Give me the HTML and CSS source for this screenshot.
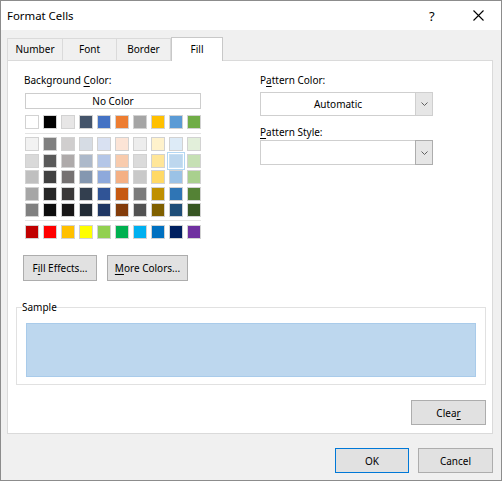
FILE: index.html
```html
<!DOCTYPE html>
<html>
<head>
<meta charset="utf-8">
<link rel="stylesheet" href="styles.css">
</head>
<body>
<div class="dialog">
  <div class="titlebar">
    <span class="title">Format Cells</span>
    <span class="help">?</span>
    <span class="close"><svg width="11" height="11" viewBox="0 0 11 11"><path d="M0.5 0.5 L10.5 10.5 M10.5 0.5 L0.5 10.5" stroke="#000" stroke-width="1.1" fill="none"/></svg></span>
  </div>
  <div class="body">
    <div class="tabs">
      <div class="tab">Number</div>
      <div class="tab">Font</div>
      <div class="tab">Border</div>
      <div class="tab active">Fill</div>
    </div>
    <div class="panel">
      <div class="top">
        <div class="left">
          <div class="label">Background <u>C</u>olor:</div>
          <div class="nocolor">No Color</div>
          <div class="row">
            <span class="sw" style="background:#ffffff"></span>
            <span class="sw" style="background:#000000"></span>
            <span class="sw" style="background:#e7e6e6"></span>
            <span class="sw" style="background:#44546a"></span>
            <span class="sw" style="background:#4472c4"></span>
            <span class="sw" style="background:#ed7d31"></span>
            <span class="sw" style="background:#a5a5a5"></span>
            <span class="sw" style="background:#ffc000"></span>
            <span class="sw" style="background:#5b9bd5"></span>
            <span class="sw" style="background:#70ad47"></span>
          </div>
          <div class="sep"></div>
          <div class="grid">
            <span class="sw" style="background:#f2f2f2"></span>
            <span class="sw" style="background:#7f7f7f"></span>
            <span class="sw" style="background:#d0cece"></span>
            <span class="sw" style="background:#d6dce4"></span>
            <span class="sw" style="background:#d9e1f2"></span>
            <span class="sw" style="background:#fce4d6"></span>
            <span class="sw" style="background:#ededed"></span>
            <span class="sw" style="background:#fff2cc"></span>
            <span class="sw" style="background:#ddebf7"></span>
            <span class="sw" style="background:#e2efda"></span>

            <span class="sw" style="background:#d9d9d9"></span>
            <span class="sw" style="background:#595959"></span>
            <span class="sw" style="background:#aeaaaa"></span>
            <span class="sw" style="background:#adb9ca"></span>
            <span class="sw" style="background:#b4c6e7"></span>
            <span class="sw" style="background:#f8cbad"></span>
            <span class="sw" style="background:#dbdbdb"></span>
            <span class="sw" style="background:#ffe699"></span>
            <span class="sw selected" style="background:#bdd7ee"></span>
            <span class="sw" style="background:#c6e0b4"></span>

            <span class="sw" style="background:#bfbfbf"></span>
            <span class="sw" style="background:#404040"></span>
            <span class="sw" style="background:#757171"></span>
            <span class="sw" style="background:#8497b0"></span>
            <span class="sw" style="background:#8ea9db"></span>
            <span class="sw" style="background:#f4b084"></span>
            <span class="sw" style="background:#c9c9c9"></span>
            <span class="sw" style="background:#ffd966"></span>
            <span class="sw" style="background:#9bc2e6"></span>
            <span class="sw" style="background:#a9d08e"></span>

            <span class="sw" style="background:#a6a6a6"></span>
            <span class="sw" style="background:#262626"></span>
            <span class="sw" style="background:#3a3838"></span>
            <span class="sw" style="background:#333f4f"></span>
            <span class="sw" style="background:#305496"></span>
            <span class="sw" style="background:#c65911"></span>
            <span class="sw" style="background:#7b7b7b"></span>
            <span class="sw" style="background:#bf8f00"></span>
            <span class="sw" style="background:#2f75b5"></span>
            <span class="sw" style="background:#548235"></span>

            <span class="sw" style="background:#808080"></span>
            <span class="sw" style="background:#0d0d0d"></span>
            <span class="sw" style="background:#171616"></span>
            <span class="sw" style="background:#222b35"></span>
            <span class="sw" style="background:#203764"></span>
            <span class="sw" style="background:#833c0b"></span>
            <span class="sw" style="background:#525252"></span>
            <span class="sw" style="background:#806000"></span>
            <span class="sw" style="background:#1f4e78"></span>
            <span class="sw" style="background:#375623"></span>
          </div>
          <div class="sep sep2"></div>
          <div class="row row-std">
            <span class="sw" style="background:#c00000"></span>
            <span class="sw" style="background:#ff0000"></span>
            <span class="sw" style="background:#ffc000"></span>
            <span class="sw" style="background:#ffff00"></span>
            <span class="sw" style="background:#92d050"></span>
            <span class="sw" style="background:#00b050"></span>
            <span class="sw" style="background:#00b0f0"></span>
            <span class="sw" style="background:#0070c0"></span>
            <span class="sw" style="background:#002060"></span>
            <span class="sw" style="background:#7030a0"></span>
          </div>
          <div class="btns">
            <button class="btn btn-fill">F<u>i</u>ll Effects...</button>
            <button class="btn btn-more"><u>M</u>ore Colors...</button>
          </div>
        </div>
        <div class="right">
          <div class="label">P<u>a</u>ttern Color:</div>
          <div class="combo">
            <span class="value">Automatic</span>
            <span class="arrow"><svg width="7" height="4" viewBox="0 0 7 4"><path d="M0.5 0.5 L3.5 3.5 L6.5 0.5" stroke="#606060" stroke-width="1" fill="none"/></svg></span>
          </div>
          <div class="label label2"><u>P</u>attern Style:</div>
          <div class="combo combo2">
            <span class="value"></span>
            <span class="arrow"><svg width="7" height="4" viewBox="0 0 7 4"><path d="M0.5 0.5 L3.5 3.5 L6.5 0.5" stroke="#606060" stroke-width="1" fill="none"/></svg></span>
          </div>
        </div>
      </div>
      <fieldset class="sample">
        <legend>Sample</legend>
        <div class="fill"></div>
      </fieldset>
      <div class="clear-row">
        <button class="btn btn-clear">Clea<u>r</u></button>
      </div>
    </div>
    <div class="footer">
      <button class="btn btn-ok">OK</button>
      <button class="btn btn-cancel">Cancel</button>
    </div>
  </div>
</div>
</body>
</html>
```
FILE: styles.css
```css
* { box-sizing: border-box; }
html, body { margin: 0; padding: 0; background: #ffffff; }
body {
  font-family: "Noto Sans", "Open Sans", sans-serif;
  font-size: 10px;
  color: #000;
}
u { text-decoration: underline; text-underline-offset: 2px; }

.dialog {
  width: 502px;
  height: 481px;
  border: 1px solid #8c8c8c;
  background: #f0f0f0;
  display: flex;
  flex-direction: column;
}

.titlebar {
  height: 29px;
  background: #ffffff;
  display: flex;
  align-items: center;
  padding-left: 6px;
  flex: none;
}
.title { font-size: 11.4px; flex: 1; }
.help { font-size: 13px; width: 10px; margin-right: 34px; }
.close { width: 11px; height: 11px; margin-right: 17px; display: flex; }

.body {
  flex: 1;
  display: flex;
  flex-direction: column;
  padding: 7px 8px 0 6px;
}

.tabs {
  display: flex;
  align-items: flex-end;
  height: 23px;
}
.tab {
  height: 22px;
  line-height: 21px;
  text-align: center;
  border: 1px solid #dadada;
  border-bottom: none;
  border-right: none;
  background: #f0f0f0;
}
.tab:nth-child(1) { width: 55px; }
.tab:nth-child(2) { width: 54px; }
.tab:nth-child(3) { width: 55px; border-right: 1px solid #dadada; }
.tab.active {
  width: 52px;
  height: 24px;
  margin-bottom: -1px;
  line-height: 22px;
  background: #ffffff;
  border: 1px solid #c8c8c8;
  border-bottom: none;
  position: relative;
  z-index: 1;
}

.panel {
  width: 486px;
  height: 374px;
  background: #ffffff;
  border: 1px solid #dadada;
  padding: 11px 6px 0 15px;
  display: flex;
  flex-direction: column;
  flex: none;
}

.top { display: flex; }
.left { width: 237px; display: flex; flex-direction: column; }
.right { display: flex; flex-direction: column; }

.label { line-height: 16px; height: 16px; padding-left: 1px; }

.nocolor {
  margin: 5px 0 0 2px;
  width: 176px;
  height: 16px;
  border: 1px solid #cdcdcd;
  text-align: center;
  line-height: 14px;
}

.row {
  margin: 6px 0 0 2px;
  display: flex;
  gap: 4px;
}
.row-std { margin-top: 4px; }
.sw {
  width: 14px;
  height: 14px;
  border: 1px solid #d2d2d2;
  display: block;
}
.sw.selected { outline: 1px solid #b3d7f3; outline-offset: 1px; border-color: #c7e0f4; }

.sep {
  margin: 4px 0 0 2px;
  width: 176px;
  height: 1px;
  background: #e3e3e3;
}
.sep2 { margin-top: 3px; }

.grid {
  margin: 3px 0 0 2px;
  display: grid;
  grid-template-columns: repeat(10, 14px);
  grid-auto-rows: 14px;
  column-gap: 4px;
  row-gap: 2.5px;
}

.btn {
  font-family: inherit;
  font-size: 10px;
  color: #000;
  background: #e1e1e1;
  border: 1px solid #adadad;
  padding: 0;
  margin: 0;
  height: 25px;
}
.btns { margin-top: 16px; display: flex; gap: 10px; }
.btn-fill { width: 74px; height: 26px; }
.btn-more { width: 81px; height: 26px; }

.right .label { padding-left: 0; }
.combo {
  margin-top: 4px;
  width: 173px;
  height: 24px;
  border: 1px solid #cfcfcf;
  display: flex;
  background: #fff;
}
.combo .value { flex: 1; text-align: center; line-height: 22px; }
.combo .arrow {
  width: 17px;
  background: #e6e6e6;
  border-left: 1px solid #cfcfcf;
  display: flex;
  align-items: center;
  justify-content: center;
}
.label2 { margin-top: 8px; }
.combo2 { margin-top: 0; height: 25px; }
.combo2 .arrow { border: 1px solid #adadad; margin: -1px -1px -1px 0; width: 18px; }

.sample {
  margin: 19px 0 0 -7px;
  width: 470px;
  height: 85px;
  border: 1px solid #e1e1e1;
  padding: 8px 0 0 5px;
  min-width: 0;
}
.sample legend {
  padding: 0;
  line-height: 15px;
  height: 15px;
}
.fill {
  margin-left: 4px;
  width: 450px;
  height: 54px;
  background: #bdd7ee;
  border: 1px solid #a9cbea;
}

.clear-row { margin-top: 15px; display: flex; justify-content: flex-end; }
.btn-clear { width: 75px; }

.footer {
  margin-top: 14px;
  display: flex;
  justify-content: flex-end;
  gap: 9px;
}
.btn-ok { width: 74px; border-color: #0078d7; }
.btn-cancel { width: 75px; }
```
